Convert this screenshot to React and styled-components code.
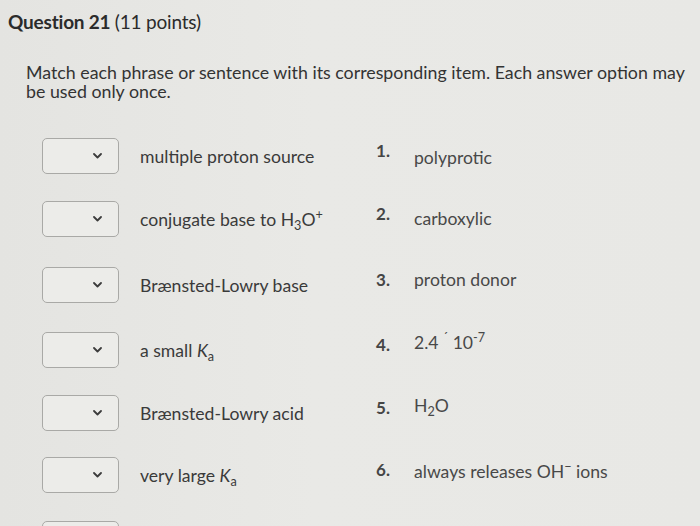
import React from 'react';
import styled, { createGlobalStyle } from 'styled-components';

const GlobalStyle = createGlobalStyle`
  html, body {
    margin: 0;
    padding: 0;
    background: #e7e7e4;
    overflow: hidden;
  }
  body {
    font-family: Lato, "Open Sans", "Liberation Sans", sans-serif;
    color: #3b3b3b;
  }
`;

const Page = styled.div`
  width: 700px;
  height: 526px;
  overflow: hidden;
  background: linear-gradient(90deg, #e4e4e1 0%, #e9e9e6 45%, #e8e8e5 100%);
`;

const Header = styled.h2`
  margin: 0;
  padding: 10px 8px 0;
  height: 34px;
  font-size: 19px;
  line-height: 24px;
  font-weight: 700;
  color: #2b2b2b;
  letter-spacing: -0.2px;

  span {
    font-weight: 400;
  }
`;

const Body = styled.div`
  padding: 19px 0 0 26px;
`;

const Prompt = styled.p`
  margin: 0;
  width: 668px;
  font-size: 17.8px;
  line-height: 18.5px;
  color: #333;
`;

const Rows = styled.div`
  margin-top: 38px;
  padding-left: 42px;
  display: flex;
  flex-direction: column;
`;

const Row = styled.div`
  display: grid;
  grid-template-columns: 77px 257px 38px 1fr;
  height: ${p => p.$h}px;
  align-items: start;
`;

const Select = styled.div`
  width: 77px;
  height: 36px;
  box-sizing: border-box;
  border: 1.5px solid #a9a9a6;
  border-radius: 5px;
  background: #ecece9;
  display: flex;
  align-items: center;
  justify-content: flex-end;
  padding-right: 16px;
`;

const Phrase = styled.div`
  height: 36px;
  display: flex;
  align-items: center;
  padding-left: 21px;
  font-size: 17.6px;
  color: #3a3a3a;
  white-space: nowrap;
`;

const Num = styled.div`
  padding-top: 2px;
  font-size: 17px;
  font-weight: 700;
  color: #454545;
`;

const Answer = styled.div`
  height: 36px;
  display: flex;
  align-items: center;
  margin-top: ${p => p.$shift || 0}px;
  font-size: 17.6px;
  color: #484848;
  white-space: nowrap;
`;

const Sub = styled.sub`
  font-size: 0.72em;
  vertical-align: -0.35em;
  line-height: 0;
`;

const Sup = styled.sup`
  font-size: 0.72em;
  vertical-align: 0.55em;
  line-height: 0;
`;

const Chevron = () => (
  <svg width="9" height="6" viewBox="0 0 9 6">
    <path d="M1 1 L4.5 4.5 L8 1" fill="none" stroke="#3c3c3c" strokeWidth="1.8" strokeLinecap="round" strokeLinejoin="round" />
  </svg>
);

const Ka = () => (
  <>
    <i>K</i>
    <Sub>a</Sub>
  </>
);

const items = [
  { h: 63, left: 'multiple proton source', right: 'polyprotic', shift: 1 },
  { h: 66, left: <>conjugate base to H<Sub>3</Sub>O<Sup>+</Sup></>, right: 'carboxylic', shift: -1 },
  { h: 65, left: 'Brænsted-Lowry base', right: 'proton donor', shift: -6 },
  { h: 63, left: <>a small <Ka /></>, right: <>2.4 <Sup>´</Sup> 10<Sup>-7</Sup></>, shift: -8 },
  { h: 62, left: 'Brænsted-Lowry acid', right: <>H<Sub>2</Sub>O</>, shift: -8 },
  { h: 64, left: <>very large <Ka /></>, right: <>always releases OH<Sup>−</Sup> ions</>, shift: -4 },
  { h: 64, left: '', right: '', shift: 0 },
];

export default function App() {
  return (
    <Page>
      <GlobalStyle />
      <Header>
        Question 21 <span>(11 points)</span>
      </Header>
      <Body>
        <Prompt>
          Match each phrase or sentence with its corresponding item. Each answer option may be used only once.
        </Prompt>
      </Body>
      <Rows>
        {items.map((it, i) => (
          <Row key={i} $h={it.h}>
            <Select>
              <Chevron />
            </Select>
            <Phrase>
              <span>{it.left}</span>
            </Phrase>
            <Num>{i + 1}.</Num>
            <Answer $shift={it.shift}>
              <span>{it.right}</span>
            </Answer>
          </Row>
        ))}
      </Rows>
    </Page>
  );
}
